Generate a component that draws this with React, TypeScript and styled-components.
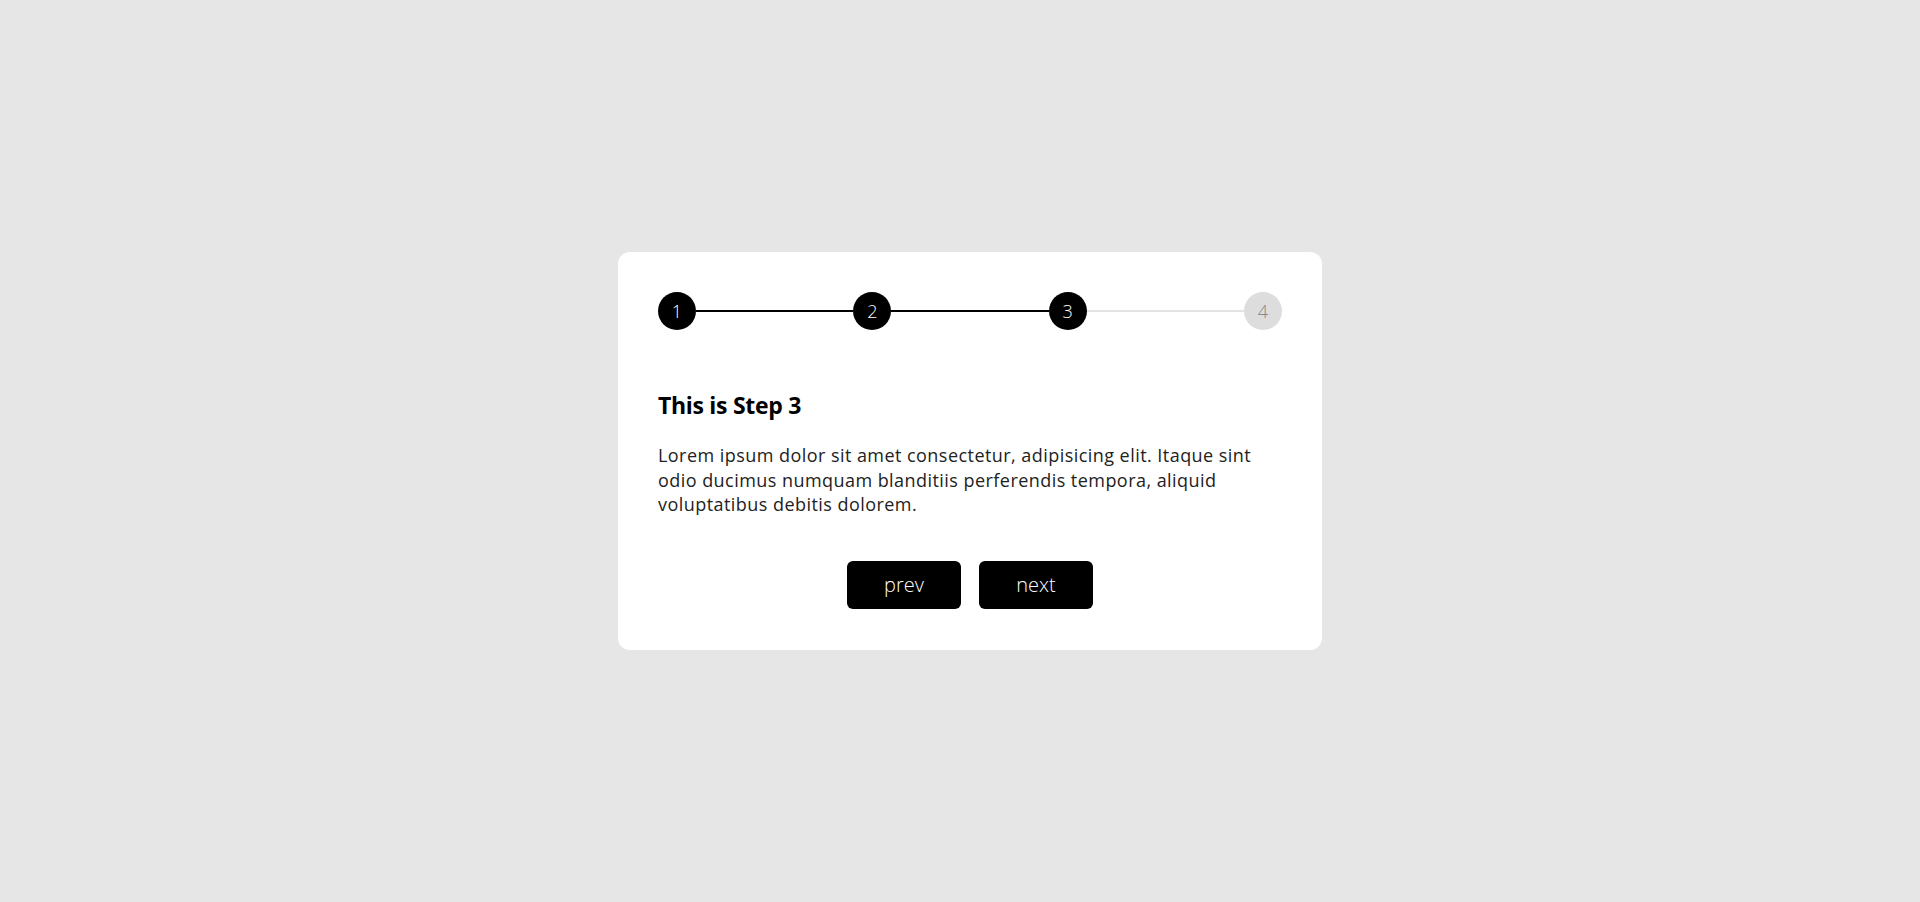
import React from 'react';
import styled, { createGlobalStyle } from 'styled-components';

const GlobalStyle = createGlobalStyle`
  html, body {
    margin: 0;
    padding: 0;
    background: #e6e6e6;
  }
  body {
    font-family: 'Open Sans', 'Liberation Sans', sans-serif;
  }
`;

const Page = styled.main`
  display: flex;
  align-items: center;
  justify-content: center;
  min-height: 902px;
  padding-left: 20px;
  box-sizing: border-box;
`;

const Card = styled.section`
  width: 704px;
  box-sizing: border-box;
  padding: 40px 40px 41px;
  background: #fff;
  border-radius: 12px;
`;

const Stepper = styled.div`
  display: flex;
  align-items: center;
`;

interface DoneProps {
  done?: boolean;
}

const Circle = styled.div<DoneProps>`
  flex: 0 0 38px;
  height: 38px;
  border-radius: 50%;
  display: flex;
  align-items: center;
  justify-content: center;
  font-size: 18px;
  font-weight: 300;
  background: ${props => (props.done ? '#000' : '#dddddd')};
  color: ${props => (props.done ? '#fff' : '#888')};
`;

const Connector = styled.div<DoneProps>`
  flex: 1;
  height: 2px;
  background: ${props => (props.done ? '#000' : '#e3e3e3')};
`;

const Title = styled.h2`
  margin: 61px 0 0;
  font-size: 23px;
  line-height: 29px;
  letter-spacing: -0.3px;
  font-weight: 700;
  color: #000;
`;

const Text = styled.p`
  margin: 23px 0 0;
  font-size: 18px;
  line-height: 24.5px;
  letter-spacing: 0.45px;
  font-weight: 400;
  color: #222;
`;

const Actions = styled.div`
  display: flex;
  justify-content: center;
  gap: 18px;
  margin-top: 44px;
`;

const Button = styled.button`
  width: 114px;
  height: 48px;
  border: none;
  border-radius: 6px;
  background: #000;
  color: #fff;
  font-family: inherit;
  font-size: 20px;
  font-weight: 300;
  cursor: pointer;
`;

const steps = [1, 2, 3, 4];

export default function App() {
  const [current, setCurrent] = React.useState(3);

  return (
    <>
      <GlobalStyle />
      <Page>
        <Card>
          <Stepper>
            {steps.map((n, i) => (
              <React.Fragment key={n}>
                {i > 0 && <Connector done={n <= current} />}
                <Circle done={n <= current}>{n}</Circle>
              </React.Fragment>
            ))}
          </Stepper>
          <Title>This is Step {current}</Title>
          <Text>
            Lorem ipsum dolor sit amet consectetur, adipisicing elit. Itaque sint odio ducimus numquam blanditiis
            perferendis tempora, aliquid voluptatibus debitis dolorem.
          </Text>
          <Actions>
            <Button onClick={() => setCurrent(c => Math.max(1, c - 1))}>prev</Button>
            <Button onClick={() => setCurrent(c => Math.min(steps.length, c + 1))}>next</Button>
          </Actions>
        </Card>
      </Page>
    </>
  );
}
